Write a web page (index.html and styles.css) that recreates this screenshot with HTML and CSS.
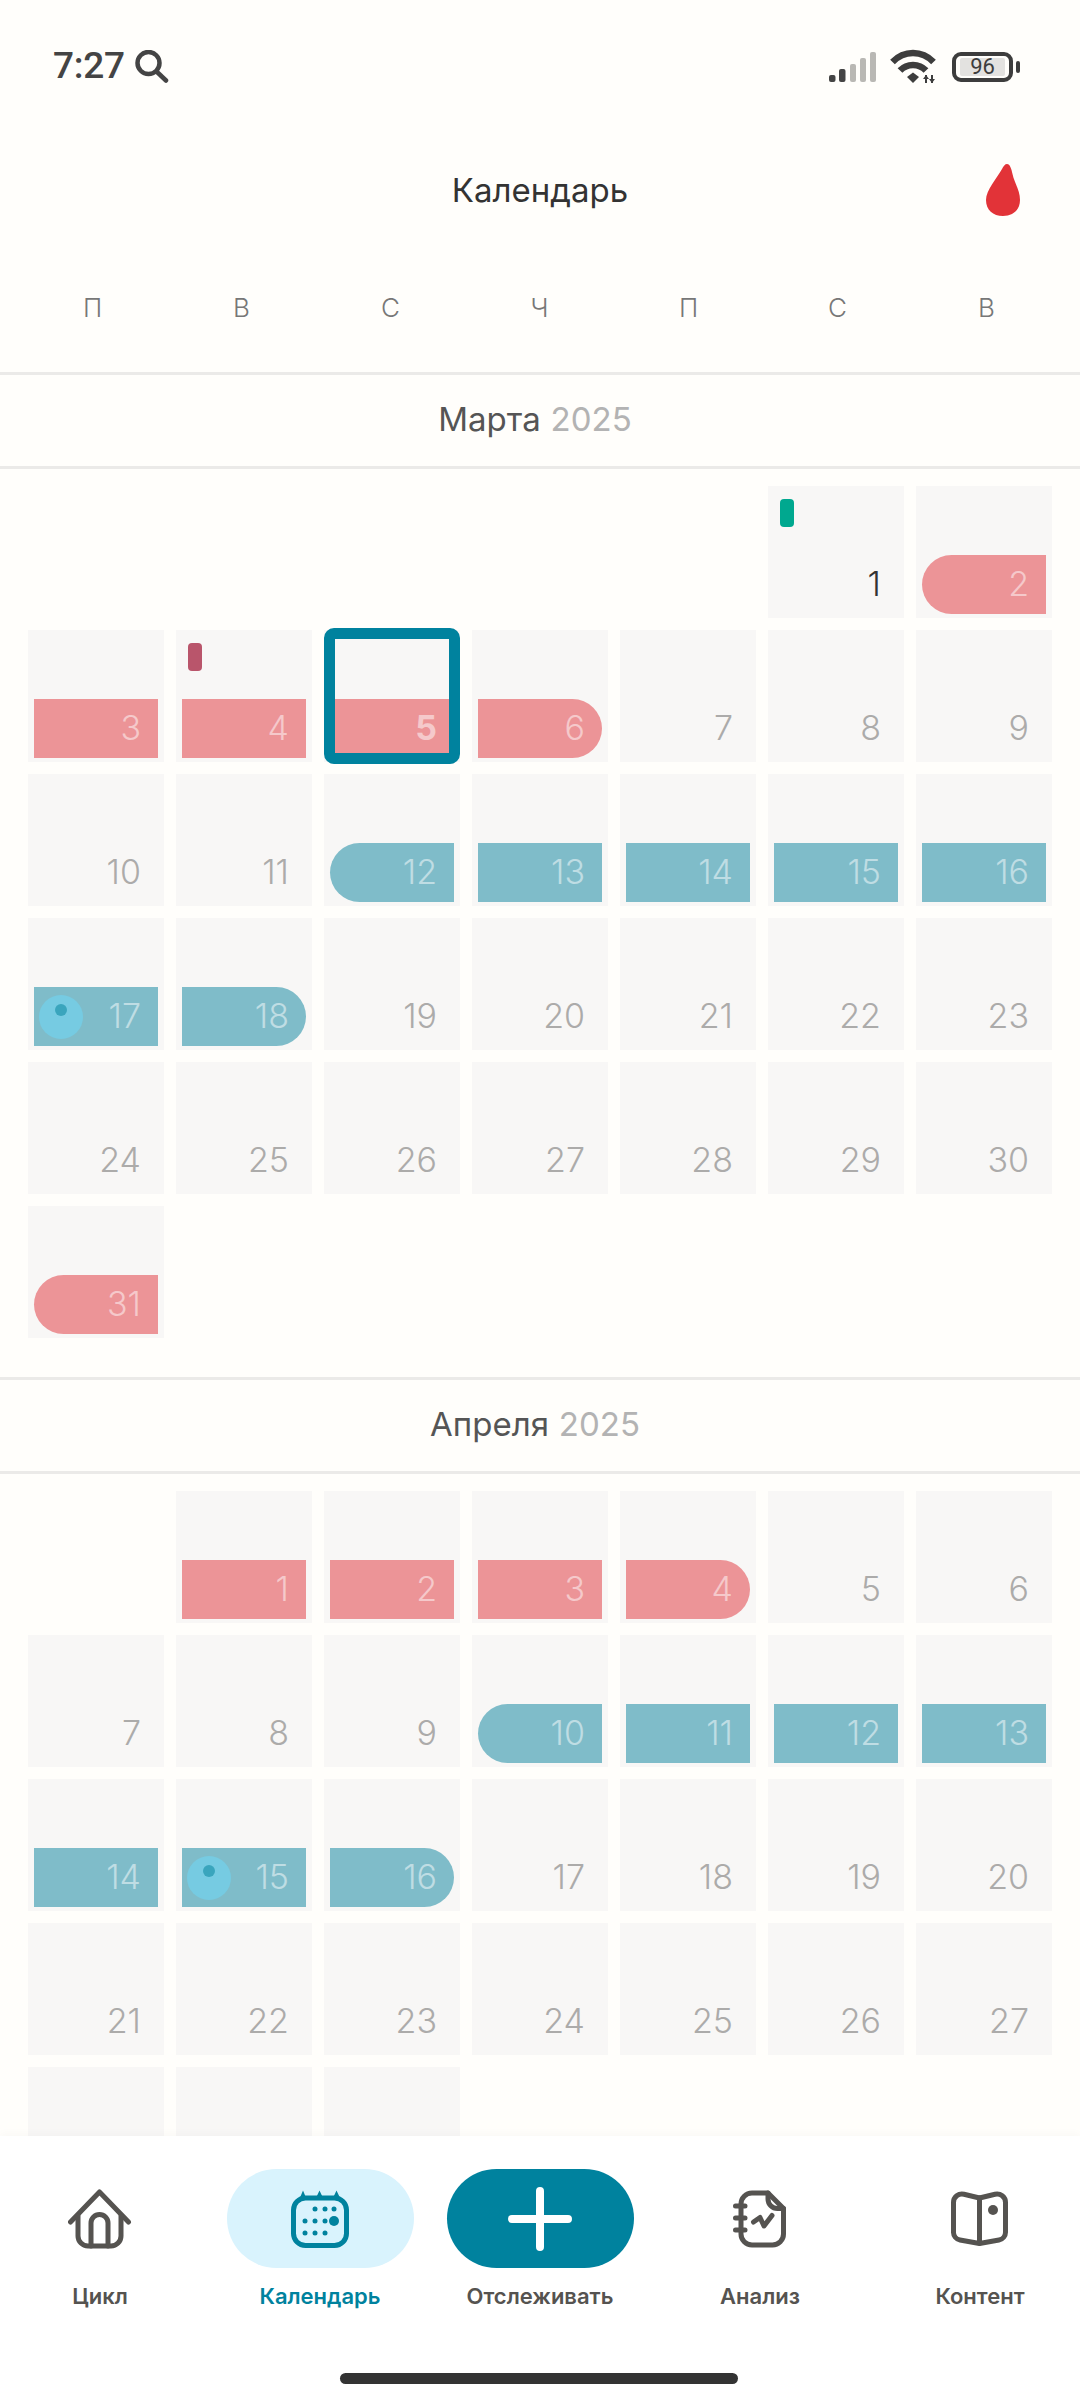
FILE: index.html
```html
<!DOCTYPE html>
<html lang="ru">
<head>
<meta charset="utf-8">
<title>Календарь</title>
<link rel="stylesheet" href="styles.css">
</head>
<body>
<div class="app">
  <div class="status">
    <div class="status-left">
      <span class="time">7:27</span>
      <svg class="search" viewBox="0 0 34 33"><circle cx="13.500" cy="13" r="11"/><path d="M21.500 21.500 L31 30.500"/></svg>
    </div>
    <div class="status-right">
      <svg class="signal" viewBox="0 0 48 30">
        <rect class="on" x="0" y="23" width="6.500" height="7" rx="2"/>
        <rect class="on" x="10" y="17" width="6.500" height="13" rx="2"/>
        <rect class="off" x="21" y="12" width="6" height="18" rx="2"/>
        <rect class="off" x="31" y="6" width="6" height="24" rx="2"/>
        <rect class="off" x="41" y="0" width="6" height="30" rx="2"/>
      </svg>
      <svg class="wifi" viewBox="0 0 46 35">
        <path class="arc" d="M2.500 13 C14 1 32 1 43.500 13"/>
        <path class="arc" d="M10 21.500 C17 14 29 14 36 21.500"/>
        <path class="dot" d="M17 28 L23 23.500 L29 28 L23 34 Z"/>
        <path class="arrows" d="M36 26 V34 M42 26 V34"/>
        <path class="dot" d="M33 30 H39 L36 26 Z M39 30 H45 L42 34 Z"/>
      </svg>
      <div class="battery"><div class="battery-fill">96</div></div>
      <div class="battery-tip"></div>
    </div>
  </div>

  <header class="topbar">
    <span></span>
    <h1 class="title">Календарь</h1>
    <svg class="drop" viewBox="0 0 34 52"><path d="M21 0 C24 0 25.500 5 26.500 10 C28 18 34 26 34 36 C34 46 27 52 17 52 C7 52 0 46 0 36 C0 26 11 14 16 5 C17.500 2 19 0 21 0 Z"/></svg>
  </header>

  <div class="weekdays">
    <span>П</span><span>В</span><span>С</span><span>Ч</span><span>П</span><span>С</span><span>В</span>
  </div>

  <main class="scroll">
    <section class="month">
      <h2 class="month-title">Марта <span class="year">2025</span></h2>
      <div class="grid">
        <div></div><div></div><div></div><div></div><div></div>
        <div class="cell"><i class="mark green"></i><div class="band dark">1</div></div>
        <div class="cell"><div class="band pink start">2</div></div>

        <div class="cell"><div class="band pink">3</div></div>
        <div class="cell"><i class="mark rose"></i><div class="band pink">4</div></div>
        <div class="cell today"><div class="band pink bold">5</div></div>
        <div class="cell"><div class="band pink end">6</div></div>
        <div class="cell"><div class="band">7</div></div>
        <div class="cell"><div class="band">8</div></div>
        <div class="cell"><div class="band">9</div></div>

        <div class="cell"><div class="band">10</div></div>
        <div class="cell"><div class="band">11</div></div>
        <div class="cell"><div class="band teal start">12</div></div>
        <div class="cell"><div class="band teal">13</div></div>
        <div class="cell"><div class="band teal">14</div></div>
        <div class="cell"><div class="band teal">15</div></div>
        <div class="cell"><div class="band teal">16</div></div>

        <div class="cell"><div class="band teal"><i class="ovul"><i class="ovul-dot"></i></i>17</div></div>
        <div class="cell"><div class="band teal end">18</div></div>
        <div class="cell"><div class="band">19</div></div>
        <div class="cell"><div class="band">20</div></div>
        <div class="cell"><div class="band">21</div></div>
        <div class="cell"><div class="band">22</div></div>
        <div class="cell"><div class="band">23</div></div>

        <div class="cell"><div class="band">24</div></div>
        <div class="cell"><div class="band">25</div></div>
        <div class="cell"><div class="band">26</div></div>
        <div class="cell"><div class="band">27</div></div>
        <div class="cell"><div class="band">28</div></div>
        <div class="cell"><div class="band">29</div></div>
        <div class="cell"><div class="band">30</div></div>

        <div class="cell"><div class="band pink start">31</div></div>
      </div>
    </section>

    <section class="month">
      <h2 class="month-title">Апреля <span class="year">2025</span></h2>
      <div class="grid">
        <div></div>
        <div class="cell"><div class="band pink">1</div></div>
        <div class="cell"><div class="band pink">2</div></div>
        <div class="cell"><div class="band pink">3</div></div>
        <div class="cell"><div class="band pink end">4</div></div>
        <div class="cell"><div class="band">5</div></div>
        <div class="cell"><div class="band">6</div></div>

        <div class="cell"><div class="band">7</div></div>
        <div class="cell"><div class="band">8</div></div>
        <div class="cell"><div class="band">9</div></div>
        <div class="cell"><div class="band teal start">10</div></div>
        <div class="cell"><div class="band teal">11</div></div>
        <div class="cell"><div class="band teal">12</div></div>
        <div class="cell"><div class="band teal">13</div></div>

        <div class="cell"><div class="band teal">14</div></div>
        <div class="cell"><div class="band teal"><i class="ovul"><i class="ovul-dot"></i></i>15</div></div>
        <div class="cell"><div class="band teal end">16</div></div>
        <div class="cell"><div class="band">17</div></div>
        <div class="cell"><div class="band">18</div></div>
        <div class="cell"><div class="band">19</div></div>
        <div class="cell"><div class="band">20</div></div>

        <div class="cell"><div class="band">21</div></div>
        <div class="cell"><div class="band">22</div></div>
        <div class="cell"><div class="band">23</div></div>
        <div class="cell"><div class="band">24</div></div>
        <div class="cell"><div class="band">25</div></div>
        <div class="cell"><div class="band">26</div></div>
        <div class="cell"><div class="band">27</div></div>

        <div class="cell"></div>
        <div class="cell"></div>
        <div class="cell"></div>
      </div>
    </section>
  </main>

  <nav class="nav">
    <div class="tabs">
      <div class="tab">
        <div class="pill">
          <svg class="icon" width="64" height="60" viewBox="0 0 64 60">
            <path d="M2.500 33 L31.500 3 L60.500 33"/>
            <path d="M10 27 V47 A10 10 0 0 0 20 57 H43 A10 10 0 0 0 53 47 V27"/>
            <path d="M23 57 V34 A8.500 8.500 0 0 1 40 34 V57"/>
          </svg>
        </div>
        <span class="tab-label">Цикл</span>
      </div>
      <div class="tab active">
        <div class="pill">
          <svg class="icon" width="58" height="58" viewBox="0 0 58 58">
            <rect x="2.500" y="8" width="53" height="47.500" rx="12"/>
            <g class="fill">
              <path d="M8 10 L12 0.500 L16 10 Z M24 10 L28.500 0.500 L33 10 Z M41 10 L45.500 0.500 L50 10 Z"/>
              <circle cx="24" cy="19" r="2.500"/><circle cx="34" cy="19" r="2.500"/><circle cx="43" cy="19" r="2.500"/>
              <circle cx="14" cy="31" r="2.500"/><circle cx="24" cy="31" r="2.500"/><circle cx="34" cy="31" r="2.500"/><circle cx="43" cy="31" r="5"/>
              <circle cx="14" cy="43" r="2.500"/><circle cx="24" cy="43" r="2.500"/><circle cx="34" cy="43" r="2.500"/>
            </g>
          </svg>
        </div>
        <span class="tab-label">Календарь</span>
      </div>
      <div class="tab add">
        <div class="pill">
          <svg class="plus" width="64" height="64" viewBox="0 0 64 64"><path d="M32 4 V60 M4 32 H60"/></svg>
        </div>
        <span class="tab-label">Отслеживать</span>
      </div>
      <div class="tab">
        <div class="pill">
          <svg class="icon" width="54" height="58" viewBox="0 0 54 58">
            <path d="M19 3 H35 L50.500 18.500 V44 A11 11 0 0 1 39.500 55 H19 A11 11 0 0 1 8 44 V14 A11 11 0 0 1 19 3 Z"/>
            <path d="M35 3 V9 A9.500 9.500 0 0 0 44.500 18.500 H50.500"/>
            <path d="M2.500 16 H12 M2.500 28 H12 M2.500 40 H12"/>
            <path d="M20.500 32 L27 27.500 L31 36 L39 25.500"/>
          </svg>
        </div>
        <span class="tab-label">Анализ</span>
      </div>
      <div class="tab">
        <div class="pill">
          <svg class="icon" width="58" height="56" viewBox="0 0 58 56">
            <path d="M28.500 7 L13 3.200 A8.500 8.500 0 0 0 2.500 11.500 V41 A8 8 0 0 0 9 49 L28.500 52.500 L48 49 A8 8 0 0 0 54.500 41 V11.500 A8.500 8.500 0 0 0 44 3.200 Z"/>
            <path d="M28.500 7 V52"/>
            <circle class="solid" cx="42" cy="19" r="5"/>
          </svg>
        </div>
        <span class="tab-label">Контент</span>
      </div>
    </div>
    <div class="home-bar"></div>
  </nav>
</div>
</body>
</html>
```

FILE: styles.css
```css
* { box-sizing: border-box; }
html, body { margin: 0; padding: 0; }
body { font-family: "Inter", "Noto Sans", sans-serif; background: #fffefb; }

.app {
  width: 1080px;
  height: 2400px;
  display: flex;
  flex-direction: column;
  overflow: hidden;
  background: #fffefb;
}

/* status bar */
.status {
  height: 130px;
  flex: none;
  display: flex;
  justify-content: space-between;
  align-items: flex-start;
  padding: 49px 60px 0 53px;
}
.status-left { display: flex; align-items: center; gap: 10px; height: 34px; }
.time { font-family: "Roboto", sans-serif; font-size: 37px; line-height: 34px; color: #444; font-weight: 500; letter-spacing: -0.3px; }
.search { width: 34px; height: 33px; fill: none; stroke: #444; stroke-width: 4.500; stroke-linecap: round; }
.status-right { display: flex; align-items: flex-start; }
.signal { width: 48px; height: 30px; margin-top: 3px; margin-right: 13px; }
.signal .on { fill: #444; }
.signal .off { fill: #b9b8b4; }
.wifi { width: 46px; height: 35px; margin-right: 16px; }
.wifi .arc { fill: none; stroke: #3d3d3d; stroke-width: 6.500; }
.wifi .dot { fill: #3d3d3d; }
.wifi .arrows { stroke: #3d3d3d; stroke-width: 2; }
.battery {
  width: 61px;
  height: 30px;
  margin-top: 3px;
  border: 4px solid #3d3d3d;
  border-radius: 9px;
  padding: 2px 4px;
}
.battery-fill {
  height: 18px;
  background: #e3e2e0;
  border-radius: 2px;
  font-family: "Roboto", sans-serif;
  font-size: 22px;
  line-height: 18px;
  color: #3d3d3d;
  text-align: center;
}
.battery-tip { width: 4px; height: 12px; margin: 12px 0 0 3px; background: #3d3d3d; border-radius: 2px; }

/* title */
.topbar {
  height: 120px;
  flex: none;
  display: grid;
  grid-template-columns: 1fr auto 1fr;
  align-items: center;
}
.title { margin: 0; font-size: 33px; font-weight: 400; color: #333; }
.drop { justify-self: end; width: 34px; height: 52px; margin-right: 60px; fill: #e23338; }

/* week header */
.weekdays {
  height: 122px;
  flex: none;
  display: grid;
  grid-template-columns: repeat(7, 137px);
  column-gap: 12px;
  padding: 40px 0 0 24px;
  font-size: 26px;
  line-height: 36px;
  font-weight: 300;
  color: #777;
  text-align: center;
}

/* months */
.scroll { flex: 1; min-height: 0; overflow: hidden; }
.month { padding-bottom: 39px; }
.month-title {
  margin: 0;
  height: 97px;
  display: flex;
  align-items: center;
  justify-content: center;
  gap: 0.3em;
  padding: 0 10px 3px 0;
  border-top: 3px solid #ebeae8;
  border-bottom: 3px solid #ebeae8;
  font-size: 33px;
  font-weight: 400;
  color: #555;
}
.year { color: #b3b3b3; }
.grid {
  display: grid;
  grid-template-columns: repeat(7, 136px);
  grid-auto-rows: 132px;
  gap: 12px;
  padding: 17px 28px 0;
}
.cell { position: relative; background: #f8f7f6; padding: 69px 6px 4px; }
.band {
  position: relative;
  height: 59px;
  display: flex;
  align-items: center;
  justify-content: flex-end;
  padding: 0 17px 2px 0;
  font-size: 34px;
  font-weight: 300;
  color: #acabaa;
}
.band.dark { color: #333; }
.band.pink { background: #ec9497; color: rgba(255, 255, 255, 0.5); }
.band.teal { background: #7fbcc9; color: rgba(255, 255, 255, 0.5); }
.band.start { border-radius: 30px 0 0 30px; }
.band.end { border-radius: 0 30px 30px 0; }
.band.bold { font-weight: 700; }
.mark { position: absolute; left: 12px; top: 13px; width: 14px; height: 28px; border-radius: 4px; }
.mark.green { background: #00a88f; }
.mark.rose { background: #b9556b; }
.today::after {
  content: "";
  position: absolute;
  inset: -2px 0;
  border: 11px solid #00829e;
  border-radius: 10px;
}
.ovul { position: absolute; left: 5px; top: 8px; width: 44px; height: 44px; border-radius: 50%; background: #76cbe2; }
.ovul-dot { position: absolute; left: 16px; top: 9px; width: 12px; height: 12px; border-radius: 50%; background: #3aa5bd; }

/* bottom nav */
.nav {
  position: relative;
  height: 264px;
  flex: none;
  padding-top: 33px;
  background: #fff;
  box-shadow: 0 -3px 8px rgba(0, 0, 0, 0.025);
}
.tabs {
  display: grid;
  grid-template-columns: repeat(5, 220px);
  justify-content: center;
}
.tab { display: flex; flex-direction: column; align-items: center; }
.pill {
  width: 187px;
  height: 99px;
  border-radius: 50px;
  display: flex;
  align-items: center;
  justify-content: center;
}
.tab.active .pill { background: #d9f3fd; }
.tab.add .pill { background: #00829e; }
.tab-label { margin-top: 14px; font-size: 22px; line-height: 28px; font-weight: 600; color: #555350; }
.tab.active .tab-label { color: #00829e; }
.icon { fill: none; stroke: #555350; stroke-width: 5; stroke-linecap: round; stroke-linejoin: round; }
.icon .solid { fill: #555350; stroke: none; }
.tab.active .icon { stroke: #00829e; }
.tab.active .icon .fill { fill: #00829e; stroke: none; }
.plus { fill: none; stroke: #fff; stroke-width: 8; stroke-linecap: round; }
.home-bar {
  position: absolute;
  left: 340px;
  top: 237px;
  width: 398px;
  height: 11px;
  border-radius: 6px;
  background: #333;
}
```
